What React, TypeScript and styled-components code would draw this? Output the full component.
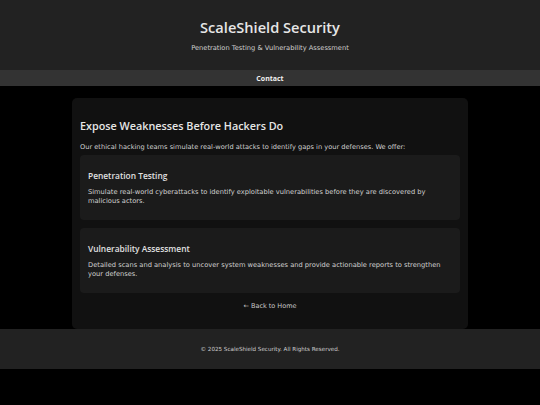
import React from "react";
import styled, { createGlobalStyle } from "styled-components";

const GlobalStyle = createGlobalStyle`
  html, body {
    margin: 0;
    padding: 0;
    background: #000;
    font-family: "DejaVu Sans", "Noto Sans", sans-serif;
    color: #e0e0e0;
  }
`;

const headingFont = `"Open Sans", "Noto Sans", sans-serif`;

const services = [
  {
    title: "Penetration Testing",
    text: "Simulate real-world cyberattacks to identify exploitable vulnerabilities before they are discovered by malicious actors.",
  },
  {
    title: "Vulnerability Assessment",
    text: "Detailed scans and analysis to uncover system weaknesses and provide actionable reports to strengthen your defenses.",
  },
];

const App: React.FC = () => {
  return (
    <>
      <GlobalStyle />
      <Header>
        <Title>ScaleShield Security</Title>
        <Tagline>Penetration Testing &amp; Vulnerability Assessment</Tagline>
      </Header>
      <Nav>
        <NavLink href="#">Contact</NavLink>
      </Nav>
      <Main>
        <Heading>Expose Weaknesses Before Hackers Do</Heading>
        <Intro>
          Our ethical hacking teams simulate real-world attacks to identify gaps in your defenses. We offer:
        </Intro>
        <ServiceList>
          {services.map((s) => (
            <Service key={s.title}>
              <ServiceTitle>{s.title}</ServiceTitle>
              <ServiceText>{s.text}</ServiceText>
            </Service>
          ))}
        </ServiceList>
        <BackLink href="#">← Back to Home</BackLink>
      </Main>
      <Footer>© 2025 ScaleShield Security. All Rights Reserved.</Footer>
    </>
  );
};

const Header = styled.header`
  background: #222;
  text-align: center;
  padding: 18px 0 17px;
`;

const Title = styled.h1`
  margin: 0;
  font-family: ${headingFont};
  font-size: 14.6px;
  line-height: 18px;
  font-weight: 600;
  color: #e6e6e6;
`;

const Tagline = styled.p`
  margin: 7px 0 0;
  font-size: 6.7px;
  line-height: 10px;
  color: #cfcfcf;
`;

const Nav = styled.nav`
  background: #333;
  height: 16px;
  display: flex;
  justify-content: center;
  align-items: center;
`;

const NavLink = styled.a`
  color: #f0f0f0;
  font-family: ${headingFont};
  font-size: 7px;
  font-weight: 700;
  text-decoration: none;
`;

const Main = styled.main`
  width: 396px;
  box-sizing: border-box;
  margin: 12px auto 0;
  padding: 8px 8px 8px;
  background: #111;
  border-radius: 5px;
  display: flex;
  flex-direction: column;
`;

const Heading = styled.h2`
  margin: 13px 0 0;
  font-family: ${headingFont};
  font-size: 10.8px;
  line-height: 14px;
  font-weight: 600;
  color: #e6e6e6;
`;

const Intro = styled.p`
  margin: 9px 0 3px;
  font-size: 6.65px;
  line-height: 10px;
  color: #d0d0d0;
`;

const ServiceList = styled.div`
  display: flex;
  flex-direction: column;
  gap: 8px;
`;

const Service = styled.div`
  background: #1b1b1b;
  border-radius: 4px;
  padding: 15px 8px;
`;

const ServiceTitle = styled.h3`
  margin: 0 0 6px;
  font-family: ${headingFont};
  font-size: 8.4px;
  line-height: 12px;
  font-weight: 600;
  color: #e0e0e0;
`;

const ServiceText = styled.p`
  margin: 0;
  font-size: 6.7px;
  line-height: 8.5px;
  color: #d0d0d0;
`;

const BackLink = styled.a`
  align-self: center;
  margin: 8px 0 10px;
  font-size: 6.5px;
  line-height: 10px;
  color: #c8c8c8;
  text-decoration: none;
`;

const Footer = styled.footer`
  background: #222;
  text-align: center;
  padding: 15px 0;
  font-size: 5.6px;
  line-height: 10px;
  color: #cfcfcf;
`;

export default App;
